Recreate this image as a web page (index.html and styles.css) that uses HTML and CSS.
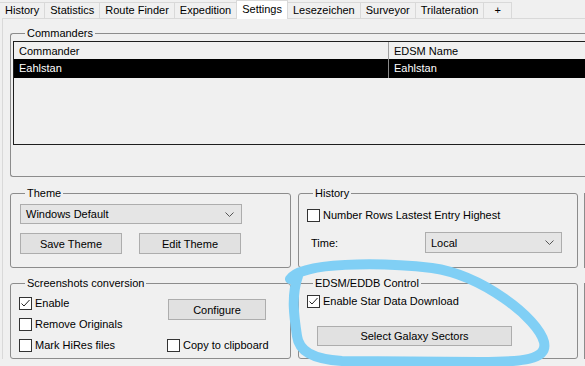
FILE: index.html
```html
<!DOCTYPE html>
<html lang="en">

<head>
    <meta charset="UTF-8">
    <meta name="viewport" content="width=device-width, initial-scale=1.0">
    <title>Settings</title>
    <link rel="stylesheet" href="styles.css">
</head>

<body>
    <div class="tabs">
        <div class="tab">History</div>
        <div class="tab">Statistics</div>
        <div class="tab">Route Finder</div>
        <div class="tab">Expedition</div>
        <div class="tab active">Settings</div>
        <div class="tab">Lesezeichen</div>
        <div class="tab">Surveyor</div>
        <div class="tab">Trilateration</div>
        <div class="tab plus">+</div>
    </div>

    <div class="page">
        <div class="row">
            <fieldset class="group commanders">
                <legend>Commanders</legend>
                <div class="grid">
                    <div class="grid-row head">
                        <div class="cell c1">Commander</div>
                        <div class="cell c2">EDSM Name</div>
                    </div>
                    <div class="grid-row selected">
                        <div class="cell c1">Eahlstan</div>
                        <div class="cell c2">Eahlstan</div>
                    </div>
                </div>
            </fieldset>
        </div>

        <div class="row mid">
            <fieldset class="group theme">
                <legend>Theme</legend>
                <div class="combo theme-combo">
                    <span>Windows Default</span>
                    <svg width="9" height="5" viewBox="0 0 9 5"><polyline points="0.5,0.5 4.5,4.5 8.5,0.5" fill="none" stroke="#555" /></svg>
                </div>
                <div class="buttons">
                    <div class="btn theme-btn">Save Theme</div>
                    <div class="btn theme-btn">Edit Theme</div>
                </div>
            </fieldset>
            <fieldset class="group history">
                <legend>History</legend>
                <div class="check history-check">
                    <span class="box"></span>
                    <span>Number Rows Lastest Entry Highest</span>
                </div>
                <div class="time-row">
                    <span class="time-label">Time:</span>
                    <div class="combo time-combo">
                        <span>Local</span>
                        <svg width="9" height="5" viewBox="0 0 9 5"><polyline points="0.5,0.5 4.5,4.5 8.5,0.5" fill="none" stroke="#555" /></svg>
                    </div>
                </div>
            </fieldset>
            <div class="group spare"></div>
        </div>

        <div class="row low">
            <fieldset class="group shots">
                <legend>Screenshots conversion</legend>
                <div class="shots-body">
                    <div class="check">
                        <span class="box"><svg width="11" height="11" viewBox="0 0 11 11"><polyline points="1.5,5.5 4,8 9.5,2" fill="none" stroke="#222" /></svg></span>
                        <span>Enable</span>
                    </div>
                    <div class="btn configure">Configure</div>
                    <div class="check">
                        <span class="box"></span>
                        <span>Remove Originals</span>
                    </div>
                    <div></div>
                    <div class="check">
                        <span class="box"></span>
                        <span>Mark HiRes files</span>
                    </div>
                    <div class="check">
                        <span class="box"></span>
                        <span>Copy to clipboard</span>
                    </div>
                </div>
            </fieldset>
            <fieldset class="group edsm">
                <legend>EDSM/EDDB Control</legend>
                <div class="check edsm-check">
                    <span class="box"><svg width="11" height="11" viewBox="0 0 11 11"><polyline points="1.5,5.5 4,8 9.5,2" fill="none" stroke="#222" /></svg></span>
                    <span>Enable Star Data Download</span>
                </div>
                <div class="btn sectors">Select Galaxy Sectors</div>
            </fieldset>
            <div class="group spare"></div>
        </div>
    </div>

    <!-- hand drawn highlight over the EDSM box -->
    <svg class="mark" width="585" height="366" viewBox="0 0 585 366">
        <path d="M290 279 C300 262 380 262 432 268 C482 275 538 318 544 342 C548 360 522 362 480 362 L342 361 C312 359 299 351 297 336 C294 316 291 296 298 276"
            fill="none" stroke="#80cff5" stroke-width="10" stroke-linecap="round" />
    </svg>
</body>

</html>
```

FILE: styles.css
```css
* {
    padding: 0;
    margin: 0;
    box-sizing: border-box;
}

html,
body {
    height: 100%;
    width: 100%;
    background-color: #f0f0f0;
    overflow: hidden;
}

body {
    position: relative;
    font-family: "Liberation Sans", Arial, sans-serif;
    font-size: 11px;
    color: #000;
}

/* tab strip */

.tabs {
    display: flex;
    height: 18px;
}

.tab {
    margin-top: 2px;
    margin-left: -1px;
    height: 16px;
    padding: 0 5px;
    line-height: 15px;
    border: 1px solid #d9d9d9;
    border-bottom: none;
    background-color: #f0f0f0;
}

.tab:first-child {
    margin-left: 0;
    border-left: none;
}

.tab.active {
    position: relative;
    z-index: 1;
    margin-top: 0;
    height: 19px;
    line-height: 16px;
    background-color: #fff;
}

.tab.plus {
    padding: 0 10px;
}

.page {
    margin-left: 2px;
    padding: 8px 0 0 7px;
    border-top: 1px solid #d9d9d9;
    border-left: 1px solid #d9d9d9;
}

/* group boxes, the window is cut off at the right */

.row {
    display: flex;
    gap: 7px;
}

.row.mid {
    margin-top: 10px;
}

.row.low {
    margin-top: 9px;
}

.group {
    flex-shrink: 0;
    min-width: 0;
    border: 1px solid #8c8c8c;
    border-radius: 3px;
}

legend {
    margin-left: 14px;
    padding: 0 2px;
    line-height: 13px;
}

.commanders {
    width: 575px;
    height: 150px;
    border-right: none;
    border-radius: 3px 0 0 3px;
}

.theme,
.shots {
    width: 281px;
}

.history,
.edsm {
    width: 280px;
}

.spare {
    width: 1px;
    margin-left: -1px;
    border-right: none;
    border-radius: 0;
}

.mid .group {
    height: 81px;
}

.low .group {
    height: 82px;
}

.mid .spare {
    margin-top: 6px;
    height: 75px;
}

.low .spare {
    margin-top: 6px;
    height: 76px;
}

/* commander grid */

.grid {
    margin: 1px 0 0 2px;
    height: 104px;
    border: 1px solid #1e1e1e;
    border-right: none;
    background-color: #f0f0f0;
}

.grid-row {
    display: flex;
    height: 17px;
    line-height: 18px;
}

.grid-row.selected {
    height: 19px;
    line-height: 19px;
    background-color: #000;
    color: #fff;
}

.cell {
    padding-left: 5px;
}

.c1 {
    width: 375px;
    border-right: 1px solid #a0a0a0;
}

.c2 {
    flex: 1;
}

.selected .c1 {
    border-right-color: #8a8a8a;
}

/* controls */

.combo {
    display: flex;
    align-items: center;
    justify-content: space-between;
    border: 1px solid #adadad;
    background-color: #e5e5e5;
    padding: 0 7px 0 5px;
}

.btn {
    display: flex;
    align-items: center;
    justify-content: center;
    border: 1px solid #adadad;
    background-color: #e1e1e1;
}

.check {
    display: flex;
    align-items: center;
    gap: 3px;
    height: 13px;
    line-height: 13px;
}

.box {
    display: flex;
    align-items: center;
    justify-content: center;
    width: 13px;
    height: 13px;
    border: 1px solid #333;
    background-color: #fff;
}

.theme-combo {
    width: 222px;
    height: 20px;
    margin: 4px 0 0 9px;
}

.buttons {
    display: flex;
    gap: 17px;
    margin: 9px 0 0 9px;
}

.theme-btn {
    width: 102px;
    height: 21px;
}

.history-check {
    margin: 9px 0 0 8px;
}

.time-row {
    display: flex;
    align-items: center;
    margin: 10px 0 0 12px;
}

.time-label {
    width: 114px;
}

.time-combo {
    width: 137px;
    height: 21px;
}

.shots-body {
    display: grid;
    grid-template-columns: 148px auto;
    grid-template-rows: 21px 21px 13px;
    margin: 7px 0 0 8px;
}

.configure {
    width: 98px;
    height: 21px;
    margin: 2px 0 0 1px;
}

.edsm-check {
    margin: 5px 0 0 8px;
}

.sectors {
    width: 195px;
    height: 20px;
    margin: 18px 0 0 18px;
}

.mark {
    position: absolute;
    left: 0;
    top: 0;
    pointer-events: none;
}
```
